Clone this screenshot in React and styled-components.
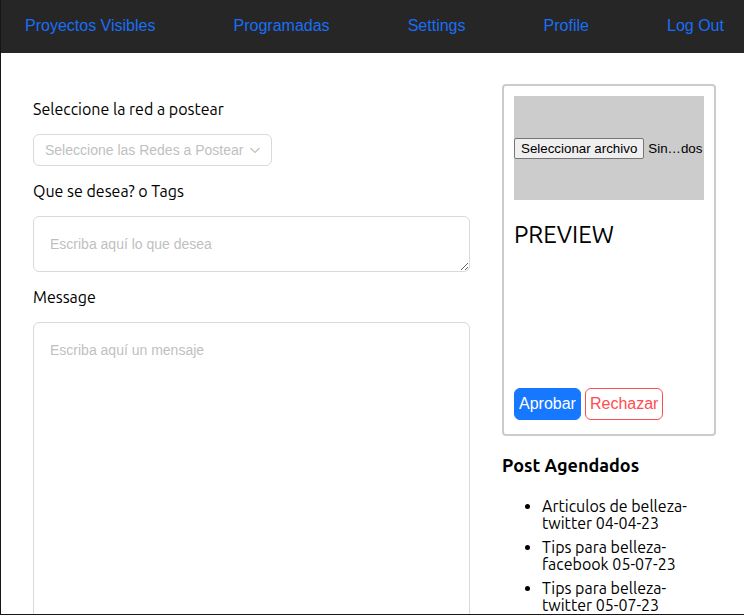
import React from 'react';
import styled, { createGlobalStyle } from 'styled-components';

const GlobalStyle = createGlobalStyle`
  html, body {
    margin: 0;
    padding: 0;
    background: #ffffff;
  }
  * {
    box-sizing: border-box;
  }
`;

const links = ['Proyectos Visibles', 'Programadas', 'Settings', 'Profile', 'Log Out'];

const posts = [
  ['Articulos de belleza-', 'twitter 04-04-23'],
  ['Tips para belleza-', 'facebook 05-07-23'],
  ['Tips para belleza-', 'twitter 05-07-23'],
];

const App = () => {
  return (
    <Page>
      <GlobalStyle />
      <NavBar>
        {links.map((l) => (
          <NavLink key={l} href='#'>
            {l}
          </NavLink>
        ))}
      </NavBar>
      <Main>
        <FormColumn>
          <Label>Seleccione la red a postear</Label>
          <SelectBox>
            <span>Seleccione las Redes a Postear</span>
            <svg width='12' height='12' viewBox='0 0 12 12'>
              <path d='M1.5 4l4.5 4.5L10.5 4' fill='none' stroke='#bfbfbf' strokeWidth='1.1' />
            </svg>
          </SelectBox>
          <Label>Que se desea? o Tags</Label>
          <TextArea placeholder='Escriba aquí lo que desea' height={56} />
          <Label>Message</Label>
          <TextArea placeholder='Escriba aquí un mensaje' height={320} />
        </FormColumn>
        <SideColumn>
          <PreviewCard>
            <UploadArea>
              <FileButton>Seleccionar archivo</FileButton>
              <FileName>Sin…dos</FileName>
            </UploadArea>
            <PreviewTitle>PREVIEW</PreviewTitle>
            <Actions>
              <ActionButton primary>Aprobar</ActionButton>
              <ActionButton>Rechazar</ActionButton>
            </Actions>
          </PreviewCard>
          <SectionTitle>Post Agendados</SectionTitle>
          <PostList>
            {posts.map(([a, b], i) => (
              <li key={i}>
                {a}
                <br />
                {b}
              </li>
            ))}
          </PostList>
        </SideColumn>
      </Main>
    </Page>
  );
};

export default App;

const Page = styled.div`
  width: 744px;
  height: 615px;
  overflow: hidden;
  border-left: 1px solid #161616;
  border-bottom: 1px solid #161616;
  font-family: Ubuntu, Lato, 'Open Sans', sans-serif;
  color: #000;
`;

const NavBar = styled.nav`
  height: 53px;
  background-color: #262626;
  display: flex;
  align-items: center;
  justify-content: space-between;
  padding: 0 20px 2px 24px;
`;

const NavLink = styled.a`
  font-family: 'Liberation Sans', Arial, sans-serif;
  font-size: 16px;
  color: #1a6ef5;
  text-decoration: none;
`;

const Main = styled.div`
  display: flex;
  padding: 31px 0 0 32px;
  gap: 32px;
`;

const FormColumn = styled.div`
  width: 437px;
  display: flex;
  flex-direction: column;
`;

const Label = styled.label`
  font-size: 16px;
  line-height: 24px;
  margin: 13px 0;
`;

const SelectBox = styled.div`
  width: 239px;
  height: 32px;
  border: 1px solid #d9d9d9;
  border-radius: 6px;
  display: flex;
  align-items: center;
  justify-content: space-between;
  padding: 0 10px 0 11px;
  font-family: 'Liberation Sans', Arial, sans-serif;
  font-size: 14px;
  color: #bfbfbf;
`;

const TextArea = styled.textarea`
  width: 100%;
  height: ${({ height }) => height}px;
  border: 1px solid #d9d9d9;
  border-radius: 6px;
  padding: 19px 16px;
  font-family: 'Liberation Sans', Arial, sans-serif;
  font-size: 14px;
  line-height: 16px;
  resize: vertical;
  outline: none;

  &::placeholder {
    color: #bfbfbf;
  }
`;

const SideColumn = styled.div`
  width: 214px;
`;

const PreviewCard = styled.div`
  width: 214px;
  height: 352px;
  border: 2px solid #cccccc;
  border-radius: 4px;
  padding: 10px;
  display: flex;
  flex-direction: column;
`;

const UploadArea = styled.div`
  height: 104px;
  background-color: #cccccc;
  display: flex;
  align-items: center;
  font-family: 'Liberation Sans', Arial, sans-serif;
  font-size: 13.33px;
`;

const FileButton = styled.span`
  display: inline-block;
  height: 21px;
  line-height: 19px;
  padding: 0 6px;
  background: #efefef;
  border: 1px solid #767676;
  border-radius: 2px;
  color: #000;
  white-space: nowrap;
  margin-top: 1px;
`;

const FileName = styled.span`
  margin-left: 4px;
  color: #000;
  white-space: nowrap;
`;

const PreviewTitle = styled.h2`
  margin: 20px 0 0;
  font-size: 24px;
  font-weight: 400;
  line-height: 30px;
  flex: 1;
`;

const Actions = styled.div`
  display: flex;
  gap: 4px;
  margin-bottom: 4px;
`;

const ActionButton = styled.button`
  height: 32px;
  padding: 0 4px;
  border-radius: 6px;
  font-family: 'Liberation Sans', Arial, sans-serif;
  font-size: 16px;
  cursor: pointer;
  border: 1px solid ${({ primary }) => (primary ? '#1677ff' : '#ff4d4f')};
  background: ${({ primary }) => (primary ? '#1677ff' : '#ffffff')};
  color: ${({ primary }) => (primary ? '#ffffff' : '#ff4d4f')};
`;

const SectionTitle = styled.h3`
  margin: 18px 0 0;
  font-size: 18px;
  font-weight: 700;
  line-height: 22px;
`;

const PostList = styled.ul`
  margin: 22px 0 0;
  padding-left: 40px;
  font-size: 16px;

  & li {
    line-height: 17px;
    margin-bottom: 7px;
  }
`;
